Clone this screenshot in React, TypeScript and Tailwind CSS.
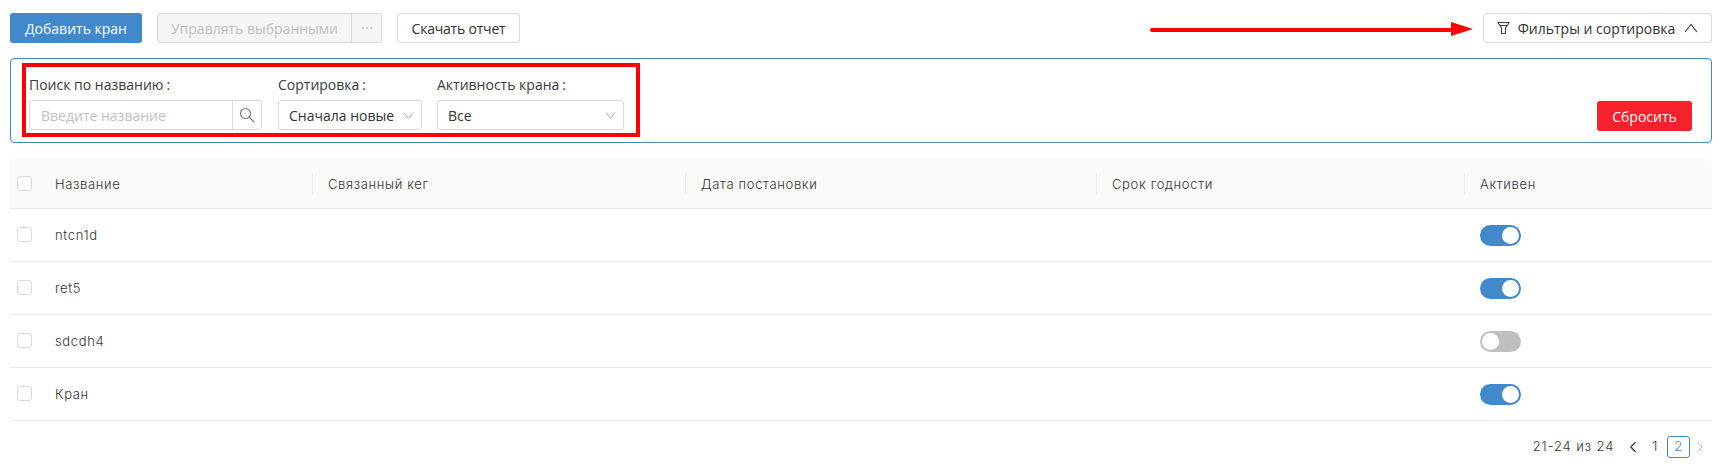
import { ChevronLeft, ChevronRight, Ellipsis } from "lucide-react";

const rows = [
  { name: "ntcn1d", active: true },
  { name: "ret5", active: true },
  { name: "sdcdh4", active: false },
  { name: "Кран", active: true },
];

const tableGrid = "grid grid-cols-[302px_373px_411px_368px_248px]";

const Checkbox = () => (
  <span className="mb-[1px] block h-[15px] w-[15px] rounded-[3px] border border-[#d9d9d9] bg-white" />
);

const Toggle = ({ active }: { active: boolean }) => (
  <span
    className={`flex h-[21px] w-[41px] items-center rounded-full p-[2px] ${
      active ? "justify-end bg-[#4189cb]" : "justify-start bg-[#bfbfbf]"
    }`}
  >
    <span className="h-[17px] w-[17px] rounded-full bg-white" />
  </span>
);

const HeaderCell = ({ title }: { title: string }) => (
  <div className="flex h-full items-center">
    <span className="mr-[15px] h-[21px] w-px bg-[#ececec]" />
    <span className="mt-[2px]">{title}</span>
  </div>
);

const FilterLabel = ({ text }: { text: string }) => (
  <div className="mb-[6px] h-[19px] leading-[19px] text-[#3a3a3a]">
    {text}
    <span className="ml-[3px]">:</span>
  </div>
);

const FilterSelect = ({ value, className }: { value: string; className: string }) => (
  <div
    className={`flex h-[30px] items-center justify-between rounded-[3px] border border-[#d9d9d9] pl-[10px] pr-[7px] text-[#333333] ${className}`}
  >
    <span>{value}</span>
    <svg width="11" height="9" viewBox="0 0 11 9" fill="none" stroke="#b0b0b0" strokeWidth="1">
      <path d="M1 1.5L5.5 7.5L10 1.5" />
    </svg>
  </div>
);

export default function App() {
  return (
    <div className="h-[474px] w-[1724px] bg-white pl-[10px] pr-[12px] pt-[13px] font-['Open_Sans',sans-serif] text-[14px] text-[#333333]">
      <div className="flex h-[30px] items-center">
        <button className="h-[30px] w-[132px] rounded-[3px] bg-[#4189cb] text-white">Добавить кран</button>
        <div className="ml-[15px] flex h-[30px] w-[225px] rounded-[3px] border border-[#d9d9d9] bg-[#f5f5f5] text-[#bfbfbf]">
          <span className="flex flex-1 items-center justify-center border-r border-[#d9d9d9]">Управлять выбранными</span>
          <span className="flex w-[29px] items-center justify-center">
            <Ellipsis size={14} strokeWidth={1.5} />
          </span>
        </div>
        <button className="ml-[15px] h-[30px] w-[123px] rounded-[3px] border border-[#d9d9d9] bg-white tracking-[-0.2px]">Скачать отчет</button>
        <svg width="323" height="16" viewBox="0 0 323 16" className="ml-auto mr-[10px] text-[#ff0000]">
          <path d="M2 10H303" stroke="currentColor" strokeWidth="4" strokeLinecap="round" />
          <path d="M301 2L323 9L301 16Z" fill="currentColor" />
        </svg>
        <button className="flex h-[30px] w-[229px] items-center justify-center gap-[8px] rounded-[3px] border border-[#d9d9d9] bg-white">
          <svg width="13" height="14" viewBox="0 0 13 14" fill="none" stroke="#404040" strokeWidth="1.1">
            <path d="M1 1.5H12L8.5 7V12.5H4.5V7Z" />
            <path d="M3 4.5H10" />
          </svg>
          <span>Фильтры и сортировка</span>
          <svg width="14" height="10" viewBox="0 0 14 10" fill="none" stroke="#404040" strokeWidth="1.2" className="ml-[1px]">
            <path d="M1 9L7 1.5L13 9" />
          </svg>
        </button>
      </div>

      <div className="mt-[15px] flex h-[85px] items-end justify-between rounded-[4px] border border-[#4189cb] pb-[11px] pl-[11px] pr-[19px]">
        <div className="mb-[-6px] flex h-[74px] w-[618px] gap-[15px] border-[4px] border-[#ff0000] pl-[3px] pt-[8px]">
          <div className="w-[234px]">
            <FilterLabel text="Поиск по названию" />
            <div className="flex h-[30px] w-[233px] rounded-[3px] border border-[#d9d9d9] text-[#bfbfbf]">
              <span className="flex flex-1 items-center border-r border-[#d9d9d9] pl-[11px]">Введите название</span>
              <span className="flex w-[28px] items-center justify-center text-[#737373]">
                <svg width="16" height="16" viewBox="0 0 16 16" fill="none" stroke="currentColor" strokeWidth="1.1">
                  <circle cx="6.5" cy="6.5" r="5" />
                  <path d="M10.2 10.2L15 15" />
                </svg>
              </span>
            </div>
          </div>
          <div className="w-[144px]">
            <FilterLabel text="Сортировка" />
            <FilterSelect value="Сначала новые" className="w-[144px]" />
          </div>
          <div className="w-[187px]">
            <FilterLabel text="Активность крана" />
            <FilterSelect value="Все" className="w-[187px]" />
          </div>
        </div>
        <button className="h-[30px] w-[95px] rounded-[3px] bg-[#f5222d] text-white">Сбросить</button>
      </div>

      <div className="mt-[16px] font-['Inter',sans-serif] text-[13px] font-[350] tracking-[0.65px]">
        <div className={`${tableGrid} h-[50px] items-center rounded-t-[4px] border-b border-[#ebebeb] bg-[#fafafa]`}>
          <div className="flex h-full items-center pl-[7px]">
            <Checkbox />
            <span className="ml-[23px] mt-[2px]">Название</span>
          </div>
          <HeaderCell title="Связанный кег" />
          <HeaderCell title="Дата постановки" />
          <HeaderCell title="Срок годности" />
          <HeaderCell title="Активен" />
        </div>
        {rows.map((row) => (
          <div key={row.name} className={`${tableGrid} h-[53px] items-center border-b border-[#ebebeb]`}>
            <div className="flex items-center pl-[7px]">
              <Checkbox />
              <span className="ml-[23px] mt-[2px]">{row.name}</span>
            </div>
            <div />
            <div />
            <div />
            <div className="pl-[16px]">
              <Toggle active={row.active} />
            </div>
          </div>
        ))}
        <div className="mt-[14px] flex h-[24px] items-center justify-end">
          <span className="tracking-[0.9px]">21-24 из 24</span>
          <ChevronLeft size={18} strokeWidth={1.5} className="ml-[10px]" />
          <span className="ml-[10px]">1</span>
          <span className="ml-[9px] flex h-[22px] w-[23px] items-center justify-center rounded-[3px] border border-[#4189cb] text-[#4189cb]">2</span>
          <ChevronRight size={16} strokeWidth={1.5} className="ml-[2px] mr-[4px] text-[#bfbfbf]" />
        </div>
      </div>
    </div>
  );
}
